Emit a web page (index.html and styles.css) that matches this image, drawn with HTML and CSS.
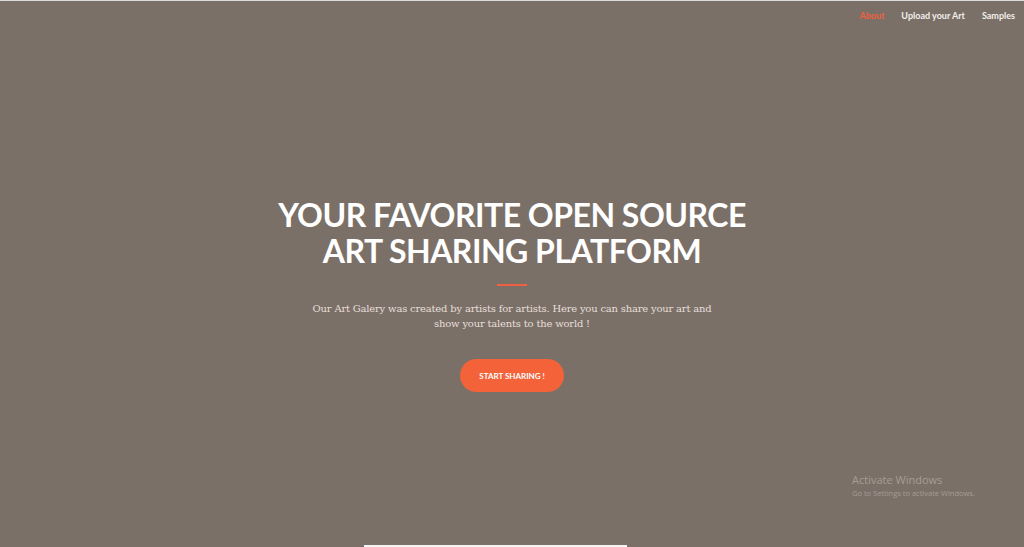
FILE: index.html
```html
<!DOCTYPE html>
<html lang="en">
<head>
<meta charset="utf-8">
<title>Art Galery</title>
<link rel="stylesheet" href="styles.css">
</head>
<body>
<div class="page">
  <nav class="nav">
    <a class="nav-link active" href="#">About</a>
    <a class="nav-link" href="#">Upload your Art</a>
    <a class="nav-link" href="#">Samples</a>
  </nav>
  <header class="hero">
    <h1 class="hero-title">YOUR FAVORITE OPEN SOURCE<br>ART SHARING PLATFORM</h1>
    <hr class="divider">
    <p class="hero-text">Our Art Galery was created by artists for artists. Here you can share your art and show your talents to the world !</p>
    <a class="btn" href="#">START SHARING !</a>
  </header>
  <div class="bottom-bar"></div>
  <div class="activate">
    <div class="activate-title">Activate Windows</div>
    <div class="activate-sub">Go to Settings to activate Windows.</div>
  </div>
</div>
</body>
</html>
```
FILE: styles.css
```css
html, body {
  margin: 0;
  padding: 0;
  height: 100%;
}
body {
  background: #7b7068;
  font-family: "Lato", "Open Sans", sans-serif;
  overflow: hidden;
}
.page {
  position: relative;
  height: 547px;
  border-top: 1px solid #dcdcdc;
  box-sizing: border-box;
  display: flex;
  flex-direction: column;
}
.nav {
  display: flex;
  justify-content: flex-end;
  gap: 17px;
  padding: 9px 9px 0 0;
  height: 20px;
}
.nav-link {
  font-family: "Lato", sans-serif;
  font-weight: 700;
  font-size: 9px;
  color: #f2eeea;
  text-decoration: none;
  line-height: 12px;
}
.nav-link.active {
  color: #f05f40;
}
.hero {
  display: flex;
  flex-direction: column;
  align-items: center;
  padding-top: 167px;
  flex: 1;
}
.hero-title {
  margin: 0;
  font-family: "Lato", sans-serif;
  font-weight: 700;
  font-size: 32px;
  letter-spacing: -0.5px;
  line-height: 36px;
  color: #fff;
  text-align: center;
}
.divider {
  width: 30px;
  height: 0;
  border: 0;
  border-top: 2px solid #f05f40;
  margin: 15px 0 15px;
}
.hero-text {
  margin: 0;
  width: 405px;
  font-family: "DejaVu Serif", serif;
  font-size: 10px;
  letter-spacing: -0.2px;
  line-height: 15px;
  color: #e6dfd8;
  text-align: center;
}
.btn {
  margin-top: 28px;
  width: 104px;
  height: 33px;
  border-radius: 17px;
  background: #f4623a;
  color: #fff;
  font-family: "Lato", sans-serif;
  font-weight: 700;
  font-size: 8px;
  text-decoration: none;
  display: flex;
  align-items: center;
  justify-content: center;
}
.bottom-bar {
  position: absolute;
  left: 364px;
  bottom: 0;
  width: 263px;
  height: 2px;
  background: #f4f4f4;
}
.activate {
  position: absolute;
  left: 852px;
  top: 472px;
  color: #a59c95;
  font-family: "Open Sans", sans-serif;
}
.activate-title {
  font-size: 11px;
  line-height: 14px;
}
.activate-sub {
  font-size: 7.5px;
  line-height: 12px;
}
```
